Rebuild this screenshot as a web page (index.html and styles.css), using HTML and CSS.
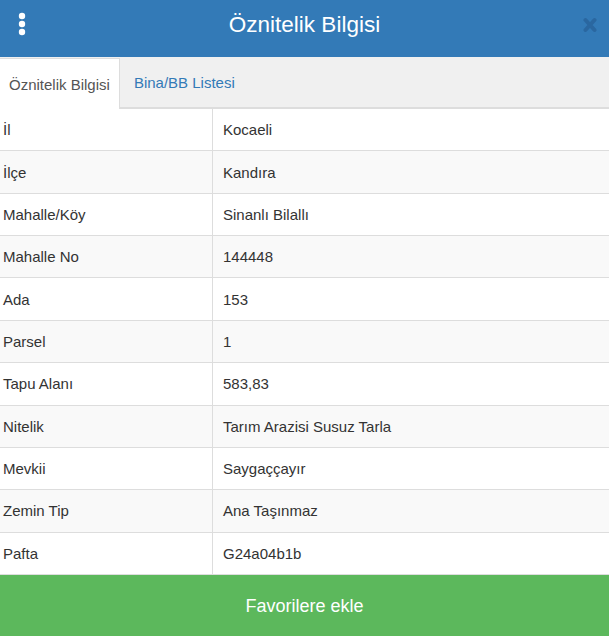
FILE: index.html
```html
<!DOCTYPE html>
<html lang="tr">
<head>
<meta charset="utf-8">
<title>Öznitelik Bilgisi</title>
<link rel="stylesheet" href="styles.css">
</head>
<body>
<div class="panel">
  <header class="header">
    <span class="menu">
      <svg width="8" height="24" viewBox="0 0 8 24"><circle cx="4" cy="4" r="3.2" fill="#fff"/><circle cx="4" cy="12" r="3.2" fill="#fff"/><circle cx="4" cy="20" r="3.2" fill="#fff"/></svg>
    </span>
    <h1 class="title">Öznitelik Bilgisi</h1>
    <span class="close">
      <svg width="14" height="16" viewBox="0 0 14 16"><path d="M2.5 3 L11.5 13 M11.5 3 L2.5 13" stroke="#2a67a0" stroke-width="4" stroke-linecap="round"/></svg>
    </span>
  </header>
  <nav class="tabs">
    <span class="tab active">Öznitelik Bilgisi</span>
    <span class="tab">Bina/BB Listesi</span>
  </nav>
  <div class="table">
    <div class="row"><div class="key">İl</div><div class="val">Kocaeli</div></div>
    <div class="row"><div class="key">İlçe</div><div class="val">Kandıra</div></div>
    <div class="row"><div class="key">Mahalle/Köy</div><div class="val">Sinanlı Bilallı</div></div>
    <div class="row"><div class="key">Mahalle No</div><div class="val">144448</div></div>
    <div class="row"><div class="key">Ada</div><div class="val">153</div></div>
    <div class="row"><div class="key">Parsel</div><div class="val">1</div></div>
    <div class="row"><div class="key">Tapu Alanı</div><div class="val">583,83</div></div>
    <div class="row"><div class="key">Nitelik</div><div class="val">Tarım Arazisi Susuz Tarla</div></div>
    <div class="row"><div class="key">Mevkii</div><div class="val">Saygaççayır</div></div>
    <div class="row"><div class="key">Zemin Tip</div><div class="val">Ana Taşınmaz</div></div>
    <div class="row"><div class="key">Pafta</div><div class="val">G24a04b1b</div></div>
  </div>
  <button class="fav">Favorilere ekle</button>
</div>
</body>
</html>
```
FILE: styles.css
```css
html, body {
  margin: 0;
  padding: 0;
}
body {
  font-family: "Liberation Sans", Arial, sans-serif;
  color: #333;
  background: #fff;
}
.panel {
  width: 609px;
  height: 636px;
  display: flex;
  flex-direction: column;
  overflow: hidden;
}
.header {
  height: 57px;
  flex: none;
  background: #337ab7;
  display: flex;
  align-items: center;
  justify-content: center;
  position: relative;
}
.menu {
  position: absolute;
  left: 18px;
  top: 12px;
  display: flex;
}
.title {
  margin: 0;
  font-size: 22.5px;
  font-weight: normal;
  color: #fff;
  line-height: 1;
  padding-bottom: 6px;
}
.close {
  position: absolute;
  right: 12px;
  top: 17px;
  display: flex;
}
.tabs {
  height: 52px;
  flex: none;
  box-sizing: border-box;
  background: #f0f0f0;
  border-bottom: 2px solid #ddd;
  display: flex;
  align-items: flex-end;
  font-size: 15px;
}
.tab {
  height: 49px;
  box-sizing: border-box;
  display: flex;
  align-items: center;
  padding: 0 15px 0 14px;
  color: #337ab7;
}
.tab.active {
  background: #fff;
  color: #555;
  border-top: 1px solid #ddd;
  border-right: 1px solid #ddd;
  padding: 0 9px 0 9px;
  height: 51px;
  margin-bottom: -2px;
}
.table {
  flex: none;
  display: flex;
  flex-direction: column;
  font-size: 15px;
}
.row {
  height: 42.36px;
  box-sizing: border-box;
  border-bottom: 1px solid #ddd;
  display: grid;
  grid-template-columns: 212px 1fr;
}
.row:nth-child(even) {
  background: #f9f9f9;
}
.key, .val {
  display: flex;
  align-items: center;
}
.key {
  padding-left: 3px;
}
.val {
  border-left: 1px solid #ddd;
  padding-left: 10px;
}
.fav {
  flex: 1;
  border: 0;
  margin: 0;
  background: #5cb85c;
  color: #fff;
  font-family: "Liberation Sans", Arial, sans-serif;
  font-size: 18px;
  padding: 2px 0 0 0;
}
```
